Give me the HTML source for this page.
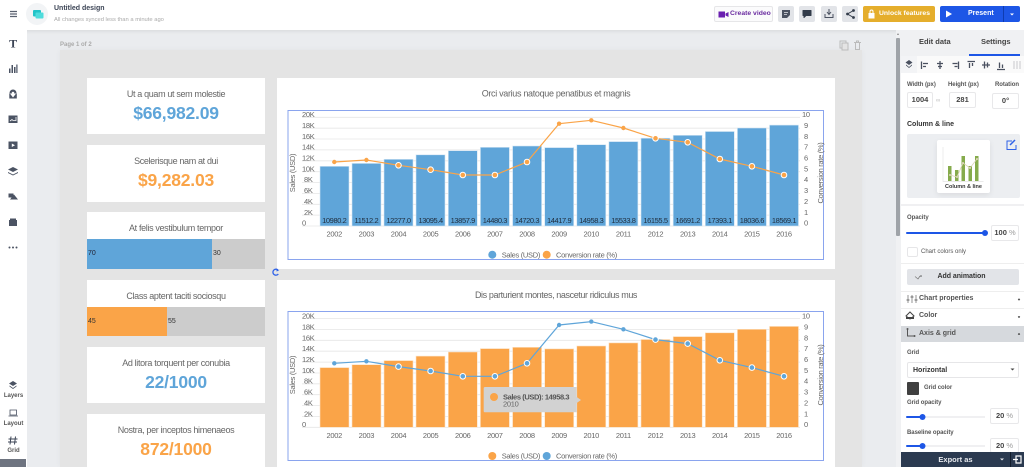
<!DOCTYPE html>
<html><head><meta charset="utf-8"><title>Untitled design</title>
<style>
html,body{margin:0;padding:0;width:1024px;height:467px;overflow:hidden;background:#eaecef;font-family:"Liberation Sans",sans-serif}
div{position:absolute;box-sizing:border-box}
.t{white-space:nowrap;line-height:10px}
.card{background:#fff;left:87px;width:178px}
.ct{left:0;width:178px;text-align:center;color:#666;font-size:9px;letter-spacing:-.35px;top:10px;line-height:12px;white-space:nowrap}
.cv{left:0;width:178px;text-align:center;font-size:17.5px;letter-spacing:-.2px;font-weight:bold;top:24px;line-height:22px}
.b{color:#5fa5d9}.o{color:#faa448}
.gb{top:6px;width:16px;height:16px;background:#e2e4e8;border-radius:2px}
.lab{font-size:6px;letter-spacing:-.05px;color:#555;font-weight:bold;white-space:nowrap;line-height:8px}
.pl{font-size:7px;color:#333;font-weight:bold;white-space:nowrap;line-height:10px}
.inp{background:#fff;border:1px solid #e8e8ea;border-radius:2px;font-size:7.5px;color:#444;text-align:center;font-weight:bold}
svg{position:absolute;left:0;top:0}
svg text{letter-spacing:-.3px}
.lb{left:0;width:27px;text-align:center;font-size:6px;font-weight:bold;color:#555;line-height:8px}
</style></head><body>

<!-- canvas background -->
<div style="left:27px;top:30px;width:869px;height:437px;background:#eaecef"></div>
<div style="left:60px;top:50px;width:802px;height:417px;background:#e4e4e4;box-shadow:0 0 6px rgba(0,0,0,.04)"></div>
<div class="t" style="left:60px;top:40px;font-size:6px;color:#aaa;font-weight:bold">Page 1 of 2</div>

<!-- KPI cards -->
<div class="card" style="top:78px;height:56px"><div class="ct">Ut a quam ut sem molestie</div><div class="cv b">$66,982.09</div></div>
<div class="card" style="top:145px;height:57px"><div class="ct">Scelerisque nam at dui</div><div class="cv o">$9,282.03</div></div>
<div class="card" style="top:212px;height:57px"><div class="ct">At felis vestibulum tempor</div>
 <div style="left:0;top:27px;width:125px;height:30px;background:#5fa5d9"><div class="t" style="left:1px;top:10px;font-size:7px;color:#223">70</div></div>
 <div style="left:125px;top:27px;width:53px;height:30px;background:#ccc"><div class="t" style="left:1px;top:10px;font-size:7px;color:#333">30</div></div></div>
<div class="card" style="top:280px;height:56px"><div class="ct">Class aptent taciti sociosqu</div>
 <div style="left:0;top:27px;width:80px;height:29px;background:#faa448"><div class="t" style="left:1px;top:10px;font-size:7px;color:#333">45</div></div>
 <div style="left:80px;top:27px;width:98px;height:29px;background:#ccc"><div class="t" style="left:1px;top:10px;font-size:7px;color:#333">55</div></div></div>
<div class="card" style="top:347px;height:56px"><div class="ct">Ad litora torquent per conubia</div><div class="cv b">22/1000</div></div>
<div class="card" style="top:414px;height:53px"><div class="ct">Nostra, per inceptos himenaeos</div><div class="cv o">872/1000</div></div>

<!-- chart cards -->
<div style="left:277px;top:78px;width:558px;height:191px;background:#fff"></div>
<div style="left:277px;top:280px;width:558px;height:187px;background:#fff"></div>

<svg width="1024" height="467" viewBox="0 0 1024 467" font-family="Liberation Sans, sans-serif">
<rect x="288" y="110.5" width="535.5" height="149" fill="none" stroke="#8aa4ee" stroke-width="1"/>
<rect x="288" y="311.5" width="535.5" height="149" fill="none" stroke="#8aa4ee" stroke-width="1"/>
<text x="556" y="96.5" font-size="9" fill="#666" text-anchor="middle" style="letter-spacing:-.32px">Orci varius natoque penatibus et magnis</text>
<text x="556" y="298" font-size="9" fill="#666" text-anchor="middle" style="letter-spacing:-.4px">Dis parturient montes, nascetur ridiculus mus</text>

<!-- chart grid -->
<g stroke="#e6e6e6" stroke-width="0.8">
<path d="M302 117.3H800M302 128.2H800M302 139H800M302 149.9H800M302 160.8H800M302 171.7H800M302 182.5H800M302 193.4H800M302 204.3H800M302 215.1H800M302 226H800"/>
<path d="M302 318.6H800M302 329.5H800M302 340.3H800M302 351.2H800M302 362.1H800M302 373H800M302 383.8H800M302 394.7H800M302 405.6H800M302 416.4H800M302 427.3H800"/>
</g>
<g fill="#666" font-size="7.5">
<text x="302" y="117">20K</text><text x="302" y="128">18K</text><text x="302" y="139">16K</text><text x="302" y="149.5">14K</text><text x="302" y="160.5">12K</text><text x="302" y="171.5">10K</text><text x="304" y="182">8K</text><text x="304" y="193">6K</text><text x="304" y="204">4K</text><text x="304" y="215">2K</text><text x="302" y="225.5">0</text>
<text x="802" y="117">10</text><text x="804" y="128">9</text><text x="804" y="139">8</text><text x="804" y="149.5">7</text><text x="804" y="160.5">6</text><text x="804" y="171.5">5</text><text x="804" y="182">4</text><text x="804" y="193">3</text><text x="804" y="204">2</text><text x="804" y="215">1</text><text x="804" y="225.5">0</text>
<text x="302" y="318.5">20K</text><text x="302" y="329.5">18K</text><text x="302" y="340.5">16K</text><text x="302" y="351">14K</text><text x="302" y="362">12K</text><text x="302" y="373">10K</text><text x="304" y="383.5">8K</text><text x="304" y="394.5">6K</text><text x="304" y="405.5">4K</text><text x="304" y="416.5">2K</text><text x="302" y="427">0</text>
<text x="802" y="318.5">10</text><text x="804" y="329.5">9</text><text x="804" y="340.5">8</text><text x="804" y="351">7</text><text x="804" y="362">6</text><text x="804" y="373">5</text><text x="804" y="383.5">4</text><text x="804" y="394.5">3</text><text x="804" y="405.5">2</text><text x="804" y="416.5">1</text><text x="804" y="427">0</text>
<text transform="translate(295,173) rotate(-90)" text-anchor="middle">Sales (USD)</text>
<text transform="translate(823,173) rotate(-90)" text-anchor="middle">Conversion rate (%)</text>
<text transform="translate(295,375) rotate(-90)" text-anchor="middle">Sales (USD)</text>
<text transform="translate(823,375) rotate(-90)" text-anchor="middle">Conversion rate (%)</text>
</g>

<!-- bars chart 1 -->
<g fill="#5fa5d9" stroke="#d4e6f4" stroke-width="0.6">
<rect x="320" y="166.3" width="29" height="59.7"/><rect x="352" y="163.4" width="29" height="62.6"/><rect x="384" y="159.3" width="29" height="66.7"/><rect x="416" y="154.8" width="29" height="71.2"/><rect x="448.3" y="150.7" width="29" height="75.3"/><rect x="480.4" y="147.3" width="29" height="78.7"/><rect x="512.6" y="146" width="29" height="80"/><rect x="544.7" y="147.6" width="29" height="78.4"/><rect x="576.8" y="144.7" width="29" height="81.3"/><rect x="608.9" y="141.6" width="29" height="84.4"/><rect x="641" y="138.2" width="29" height="87.8"/><rect x="673.2" y="135.3" width="29" height="90.7"/><rect x="705.3" y="131.5" width="29" height="94.5"/><rect x="737.4" y="128" width="29" height="98"/><rect x="769.5" y="125.1" width="29" height="100.9"/>
</g>
<g fill="#1f2d3d" font-size="7.5" text-anchor="middle" style="letter-spacing:-.4px">
<text x="334.3" y="223" style="letter-spacing:-.4px">10980.2</text><text x="366.4" y="223" style="letter-spacing:-.4px">11512.2</text><text x="398.5" y="223" style="letter-spacing:-.4px">12277.0</text><text x="430.6" y="223" style="letter-spacing:-.4px">13095.4</text><text x="462.8" y="223" style="letter-spacing:-.4px">13857.9</text><text x="494.9" y="223" style="letter-spacing:-.4px">14480.3</text><text x="527" y="223" style="letter-spacing:-.4px">14720.3</text><text x="559.1" y="223" style="letter-spacing:-.4px">14417.9</text><text x="591.3" y="223" style="letter-spacing:-.4px">14958.3</text><text x="623.4" y="223" style="letter-spacing:-.4px">15533.8</text><text x="655.5" y="223" style="letter-spacing:-.4px">16155.5</text><text x="687.7" y="223" style="letter-spacing:-.4px">16691.2</text><text x="719.8" y="223" style="letter-spacing:-.4px">17393.1</text><text x="751.9" y="223" style="letter-spacing:-.4px">18036.6</text><text x="784" y="223" style="letter-spacing:-.4px">18569.1</text>
</g>
<g fill="#666" font-size="7.5" text-anchor="middle">
<text x="334.3" y="236.5">2002</text><text x="366.4" y="236.5">2003</text><text x="398.5" y="236.5">2004</text><text x="430.6" y="236.5">2005</text><text x="462.8" y="236.5">2006</text><text x="494.9" y="236.5">2007</text><text x="527" y="236.5">2008</text><text x="559.1" y="236.5">2009</text><text x="591.3" y="236.5">2010</text><text x="623.4" y="236.5">2011</text><text x="655.5" y="236.5">2012</text><text x="687.7" y="236.5">2013</text><text x="719.8" y="236.5">2014</text><text x="751.9" y="236.5">2015</text><text x="784" y="236.5">2016</text>
</g>
<polyline fill="none" stroke="#faa448" stroke-width="1.2" points="334.3,162 366.4,160 398.5,165.3 430.6,169.7 462.8,175 494.9,175 527,162 559.1,123.7 591.3,120.3 623.4,128 655.5,138.3 687.7,142.3 719.8,159 751.9,166.3 784,175"/>
<g fill="#faa448">
<circle cx="334.3" cy="162" r="2.2"/><circle cx="366.4" cy="160" r="2.2"/><circle cx="559.1" cy="123.7" r="2.2"/><circle cx="591.3" cy="120.3" r="2.2"/><circle cx="623.4" cy="128" r="2.2"/>
<g stroke="#fff" stroke-width="1"><circle cx="398.5" cy="165.3" r="2.8"/><circle cx="430.6" cy="169.7" r="2.8"/><circle cx="462.8" cy="175" r="2.8"/><circle cx="494.9" cy="175" r="2.8"/><circle cx="527" cy="162" r="2.8"/><circle cx="655.5" cy="138.3" r="2.8"/><circle cx="687.7" cy="142.3" r="2.8"/><circle cx="719.8" cy="159" r="2.8"/><circle cx="751.9" cy="166.3" r="2.8"/><circle cx="784" cy="175" r="2.8"/></g>
</g>
<circle cx="492.3" cy="254.7" r="4" fill="#5fa5d9"/><circle cx="546.7" cy="254.7" r="4" fill="#faa448"/>
<g fill="#666" font-size="7.5"><text x="501.7" y="257.3">Sales (USD)</text><text x="556" y="257.3">Conversion rate (%)</text></g>

<!-- bars chart 2 -->
<g fill="#faa448" stroke="#fde3c5" stroke-width="0.6">
<rect x="320" y="367.6" width="29" height="59.7"/><rect x="352" y="364.7" width="29" height="62.6"/><rect x="384" y="360.6" width="29" height="66.7"/><rect x="416" y="356.1" width="29" height="71.2"/><rect x="448.3" y="352" width="29" height="75.3"/><rect x="480.4" y="348.6" width="29" height="78.7"/><rect x="512.6" y="347.3" width="29" height="80"/><rect x="544.7" y="348.9" width="29" height="78.4"/><rect x="576.8" y="346" width="29" height="81.3"/><rect x="608.9" y="342.9" width="29" height="84.4"/><rect x="641" y="339.5" width="29" height="87.8"/><rect x="673.2" y="336.6" width="29" height="90.7"/><rect x="705.3" y="332.8" width="29" height="94.5"/><rect x="737.4" y="329.3" width="29" height="98"/><rect x="769.5" y="326.4" width="29" height="100.9"/>
</g>
<g fill="#666" font-size="7.5" text-anchor="middle">
<text x="334.3" y="437.8">2002</text><text x="366.4" y="437.8">2003</text><text x="398.5" y="437.8">2004</text><text x="430.6" y="437.8">2005</text><text x="462.8" y="437.8">2006</text><text x="494.9" y="437.8">2007</text><text x="527" y="437.8">2008</text><text x="559.1" y="437.8">2009</text><text x="591.3" y="437.8">2010</text><text x="623.4" y="437.8">2011</text><text x="655.5" y="437.8">2012</text><text x="687.7" y="437.8">2013</text><text x="719.8" y="437.8">2014</text><text x="751.9" y="437.8">2015</text><text x="784" y="437.8">2016</text>
</g>
<polyline fill="none" stroke="#5fa5d9" stroke-width="1.2" points="334.3,363.3 366.4,361.3 398.5,366.6 430.6,371 462.8,376.3 494.9,376.3 527,363.3 559.1,325 591.3,321.6 623.4,329.3 655.5,339.6 687.7,343.6 719.8,360.3 751.9,367.6 784,376.3"/>
<g fill="#5fa5d9">
<circle cx="334.3" cy="363.3" r="2.2"/><circle cx="366.4" cy="361.3" r="2.2"/><circle cx="559.1" cy="325" r="2.2"/><circle cx="591.3" cy="321.6" r="2.2"/><circle cx="623.4" cy="329.3" r="2.2"/>
<g stroke="#fff" stroke-width="1"><circle cx="398.5" cy="366.6" r="2.8"/><circle cx="430.6" cy="371" r="2.8"/><circle cx="462.8" cy="376.3" r="2.8"/><circle cx="494.9" cy="376.3" r="2.8"/><circle cx="527" cy="363.3" r="2.8"/><circle cx="655.5" cy="339.6" r="2.8"/><circle cx="687.7" cy="343.6" r="2.8"/><circle cx="719.8" cy="360.3" r="2.8"/><circle cx="751.9" cy="367.6" r="2.8"/><circle cx="784" cy="376.3" r="2.8"/></g>
</g>
<circle cx="492.3" cy="456" r="4" fill="#faa448"/><circle cx="546.7" cy="456" r="4" fill="#5fa5d9"/>
<g fill="#666" font-size="7.5"><text x="501.7" y="458.6">Sales (USD)</text><text x="556" y="458.6">Conversion rate (%)</text></g>

<!-- tooltip -->
<path d="M485 387H576.7V397L581 400L576.7 403V412.3H485Q483.7 412.3 483.7 411V388.3Q483.7 387 485 387Z" fill="#d2d2d2"/>
<circle cx="494" cy="397" r="4" fill="#faa448"/>
<text x="503" y="399.6" font-size="7.5" font-weight="bold" fill="#555" style="letter-spacing:-.4px">Sales (USD): 14958.3</text>
<text x="503" y="406.5" font-size="7.5" fill="#666">2010</text>

<!-- rotate handle -->
<path d="M278 270A3 3 0 1 0 278.3 274" fill="none" stroke="#2f62e8" stroke-width="1.3"/>
<path d="M276.5 268.5L279 270.5L276.5 271.5Z" fill="#2f62e8"/>
<!-- page icons -->
<g fill="none" stroke="#bbb" stroke-width="1"><rect x="840" y="41" width="6" height="7"/><rect x="842" y="43" width="6" height="7" fill="#e4e4e4"/><path d="M854 42.5H861M855.5 42.5V49.5H859.5V42.5M856.5 42.5V41H858.5V42.5"/></g>
</svg>

<!-- Top bar -->
<div style="left:0;top:0;width:1024px;height:30px;background:#fff;box-shadow:0 1px 4px rgba(0,0,0,.09)"></div>
<!-- Left bar -->
<div style="left:0;top:30px;width:27px;height:437px;background:#fff"></div>
<div style="left:0;top:459px;width:26px;height:8px;background:#6e7480"></div>
<div class="t" style="left:54px;top:4px;font-size:7px;font-weight:bold;color:#3c4556">Untitled design</div>
<div class="t" style="left:54px;top:14.5px;font-size:5.8px;color:#aaa">All changes synced less than a minute ago</div>
<div class="lb" style="top:392px">Layers</div>
<div class="lb" style="top:420px">Layout</div>
<div class="lb" style="top:447px">Grid</div>

<!-- top right buttons -->
<div style="left:714px;top:6px;width:59px;height:16px;background:#fbfbfc;border:1px solid #e6e6e8;border-radius:2px"></div>
<div class="t" style="left:730px;top:9px;font-size:6.8px;font-weight:bold;color:#6a2ca0">Create video</div>
<div class="gb" style="left:778px"></div><div class="gb" style="left:799px"></div><div class="gb" style="left:821px"></div><div class="gb" style="left:842px"></div>
<div style="left:863px;top:6px;width:72px;height:16px;background:#e5ae2c;border-radius:2px"></div>
<div class="t" style="left:879px;top:9px;font-size:6.8px;font-weight:bold;color:#fff">Unlock features</div>
<div style="left:940px;top:6px;width:80px;height:16px;background:#1d56e6;border-radius:2px"></div>
<div style="left:1003px;top:6px;width:1px;height:16px;background:#0f3cb0"></div>
<div class="t" style="left:968px;top:9px;font-size:7px;font-weight:bold;color:#fff">Present</div>

<!-- right panel -->
<div style="left:896px;top:30px;width:5px;height:437px;background:#f0f1f3"></div>
<div style="left:896px;top:38px;width:4px;height:198px;background:#9fa3a8;border-radius:1px"></div>
<div style="left:901px;top:30px;width:123px;height:437px;background:#fff"></div>
<div style="left:901px;top:30px;width:123px;height:26px;background:#f0f1f3"></div>
<div class="t" style="left:919px;top:37px;font-size:7.5px;font-weight:bold;color:#444">Edit data</div>
<div class="t" style="left:981px;top:37px;font-size:7.5px;font-weight:bold;color:#444">Settings</div>
<div style="left:969px;top:54px;width:51px;height:2px;background:#1d56e6"></div>
<div style="left:901px;top:56px;width:123px;height:17px;background:#f3f4f6"></div>
<div style="left:917px;top:56px;width:107px;height:17px;background:#fafafa"></div>
<div class="lab" style="left:907px;top:81px">Width (px)</div>
<div class="lab" style="left:948px;top:81px">Height (px)</div>
<div class="lab" style="left:995px;top:81px">Rotation</div>
<div class="inp" style="left:907px;top:92px;width:26px;height:16px;line-height:14px">1004</div>
<div class="t" style="left:936px;top:96px;font-size:6px;color:#bbb">&#8734;</div>
<div class="inp" style="left:949px;top:92px;width:27px;height:16px;line-height:14px">281</div>
<div class="inp" style="left:992px;top:93px;width:27px;height:16px;line-height:14px">0&#176;</div>
<div class="pl" style="left:907px;top:120px">Column &amp; line</div>
<div style="left:907px;top:134px;width:113px;height:64px;background:#eceef1;border-radius:2px"></div>
<div style="left:937px;top:140px;width:53px;height:53px;background:#fff;border-radius:2px;box-shadow:0 2px 6px rgba(0,0,0,.08)"></div>
<div class="t" style="left:937px;top:182px;width:53px;text-align:center;font-size:5.5px;font-weight:bold;color:#333">Column &amp; line</div>
<div style="left:901px;top:204px;width:123px;height:2px;background:#f0f0f2"></div>
<div class="lab" style="left:907px;top:214px">Opacity</div>
<div class="inp" style="left:991px;top:225px;width:28px;height:16px;line-height:14px">100<span style="color:#999;font-weight:normal"> %</span></div>
<div style="left:907px;top:247px;width:11px;height:10px;background:#fff;border:1px solid #e6e6e8;border-radius:2px"></div>
<div class="t" style="left:921px;top:247px;font-size:6px;color:#555">Chart colors only</div>
<div style="left:901px;top:263px;width:123px;height:1px;background:#eee"></div>
<div style="left:907px;top:269px;width:112px;height:16px;background:#e2e4e8;border-radius:2px"></div>
<div class="pl" style="left:937.5px;top:272px;letter-spacing:-.05px">Add animation</div>
<div style="left:901px;top:291px;width:123px;height:1px;background:#eee"></div>
<div class="pl" style="left:919px;top:294px;color:#555">Chart properties</div>
<div style="left:901px;top:308px;width:123px;height:1px;background:#eee"></div>
<div class="pl" style="left:919px;top:311px;color:#555">Color</div>
<div style="left:901px;top:326px;width:123px;height:16px;background:#d6d9dd"></div>
<div class="pl" style="left:919px;top:328.5px;color:#555">Axis &amp; grid</div>
<div class="lab" style="left:907px;top:349px">Grid</div>
<div class="pl" style="left:907px;top:362px;width:112px;height:16px;background:#fff;border:1px solid #e6e6e8;border-radius:2px;padding:3px 5px">Horizontal</div>
<div style="left:907px;top:382px;width:12px;height:13px;background:#404040;border-radius:1px"></div>
<div class="lab" style="left:924px;top:384px">Grid color</div>
<div class="lab" style="left:907px;top:399px">Grid opacity</div>
<div class="inp" style="left:990px;top:408px;width:29px;height:16px;line-height:14px">20 <span style="color:#999;font-weight:normal">%</span></div>
<div class="lab" style="left:907px;top:429px">Baseline opacity</div>
<div class="inp" style="left:990px;top:438px;width:29px;height:15px;line-height:14px">20 <span style="color:#999;font-weight:normal">%</span></div>
<div style="left:901px;top:452px;width:123px;height:15px;background:#2b3a50"></div>
<div style="left:1010px;top:452px;width:1px;height:15px;background:#111c2c"></div>
<div class="t" style="left:901px;top:455px;width:109px;text-align:center;font-size:7.5px;font-weight:bold;color:#e8eaee">Export as</div>

<!-- icon overlay -->
<svg width="1024" height="467" viewBox="0 0 1024 467" font-family="Liberation Sans, sans-serif">
<path d="M10 11.5H17M10 14H17M10 16.5H17" stroke="#5a6270" stroke-width="1.2"/>
<circle cx="37" cy="14" r="11" fill="#f2f4f6"/>
<rect x="33" y="10" width="8" height="6.5" fill="#22c4c8" rx="1"/><rect x="35.5" y="12.5" width="8" height="6" fill="#4fdcdc" rx="1"/>
<text x="13" y="47.5" font-family="Liberation Serif, serif" font-size="12" font-weight="bold" text-anchor="middle" fill="#3c4556">T</text>
<path d="M9 73V68.5H10.5V73ZM11.5 73V65H13V73ZM14 73V67H15.5V73ZM16.3 73V64.5H17.5V73Z" fill="#4b5363"/>
<path d="M13 89.5A3.5 3.5 0 0 1 16.5 93L13 97.5L9.5 93A3.5 3.5 0 0 1 13 89.5ZM9.3 93.5V98.5H16.8V93.5" fill="#4b5363"/><circle cx="13" cy="93" r="1.3" fill="#fff"/>
<path d="M8.5 115.5H17.5V123H8.5Z" fill="#4b5363"/><path d="M10 121L12 119.5L13 120.5H16V117" fill="none" stroke="#fff" stroke-width=".8"/>
<path d="M8.5 141.5H17.5V149H8.5Z" fill="#4b5363"/><path d="M11.8 143.5L15 145.3L11.8 147Z" fill="#fff"/>
<path d="M13 167L18 169.5L13 172L8 169.5ZM8 172L13 174.5L18 172V173L13 175.5L8 173Z" fill="#4b5363"/>
<path d="M8.5 193.5H13.5V197.5H8.5Z" fill="#4b5363"/><path d="M14 194.5L18 199.5H10Z" fill="#4b5363"/>
<path d="M10 218.5H16V220H17V226H9V220H10Z" fill="#4b5363"/>
<circle cx="9.5" cy="247.5" r="1" fill="#4b5363"/><circle cx="13" cy="247.5" r="1" fill="#4b5363"/><circle cx="16.5" cy="247.5" r="1" fill="#4b5363"/>
<path d="M13 381L17 383.5L13 386L9 383.5ZM9.5 385.5L13 388L16.5 385.5V386.5L13 389L9.5 386.5Z" fill="#4b5363"/>
<path d="M10 410H16.5V415H10ZM8.5 416H18" fill="none" stroke="#4b5363" stroke-width=".8"/>
<path d="M11 436.5L10 444.5M15.5 436.5L14.5 444.5M8.5 439H17.5M8 442H17" stroke="#3c4556" stroke-width="1" fill="none"/>
<path d="M718.5 11.5H725V17.5H718.5ZM725.5 13.5L728.5 12V17L725.5 15.5Z" fill="#6a1fb0"/>
<path d="M782 10H790V15L787 18H782Z" fill="#4a5160"/><path d="M784 12.5H788M784 14.5H787" stroke="#e2e4e8" stroke-width=".8"/>
<path d="M803 10.5H811V15.5H806L804 17.5V15.5H803Z" fill="#333c4a" stroke="#333c4a" stroke-linejoin="round"/>
<path d="M829 9V14M827 12L829 14.5L831 12M825 14V17.5H833V14" fill="none" stroke="#4a5160" stroke-width="1"/>
<path d="M853.5 10.5L847.5 14L853.5 17.5" fill="none" stroke="#333c4a" stroke-width="1"/><circle cx="853.5" cy="10.5" r="1.4" fill="#333c4a"/><circle cx="847.5" cy="14" r="1.4" fill="#333c4a"/><circle cx="853.5" cy="17.5" r="1.4" fill="#333c4a"/>
<path d="M868.5 13H874.5V18.5H868.5Z" fill="#fff"/><path d="M870 13V11.5A1.5 1.5 0 0 1 873 11.5V13" fill="none" stroke="#fff"/>
<path d="M946 10.5L952 14L946 17.5Z" fill="#fff"/>
<path d="M1010 13.5H1014L1012 15.5Z" fill="#fff"/>
<path d="M897 35L898 33L899 35Z" fill="#888"/>
<!-- alignment row -->
<g stroke="#4a5160" fill="none" stroke-width="1.3">
<path d="M921.5 61.5V69M923 63.5H928M923 66.5H926"/>
<path d="M940 61V69M937 63.5H943M938 66.5H942"/>
<path d="M958.5 61.5V69M952.5 63.5H957.5M954.5 66.5H957.5"/>
<path d="M967.5 61.5H975M969.5 63V68M972.5 63V66"/>
<path d="M982 65H990M984.5 61.5V68.5M987.5 62.5V67.5"/>
<path d="M997 69.5H1005M999.5 62.5V68M1002.5 64.5V68"/>
</g>
<path d="M1014 61V69M1017 61V69M1020 61V69" stroke="#c8c8cc" fill="none"/>
<path d="M909 60L912.5 62.5L909 65L905.5 62.5ZM906 64.5L909 67L912 64.5V65.5L909 68L906 65.5Z" fill="#4a5160"/>
<!-- thumb chart -->
<path d="M943 147V181.5H983.5" stroke="#e4e4e4" fill="none" stroke-width=".7"/>
<g fill="#86ab4c"><rect x="948" y="166" width="3.5" height="15"/><rect x="955" y="170" width="3.5" height="11"/><rect x="961.5" y="156" width="3.5" height="25"/><rect x="968.5" y="166" width="3.5" height="15"/><rect x="975" y="156" width="3.5" height="25"/></g>
<polyline points="950,175 957,177 963,163 970,168 977,159" fill="none" stroke="#dcd5b8" stroke-width=".8"/>
<g fill="#e0d5bd"><circle cx="950" cy="175" r="1"/><circle cx="957" cy="177" r="1"/><circle cx="963" cy="163" r="1"/><circle cx="970" cy="168" r="1"/><circle cx="977" cy="159" r="1"/></g>
<path d="M1006.5 141H1012M1016 145V149.5H1007V140.5" fill="none" stroke="#2f62e8" stroke-width="1"/><path d="M1010 145L1015 140" stroke="#2f62e8" stroke-width="1.5"/>
<!-- sliders -->
<path d="M907 233H985" stroke="#1d56e6" stroke-width="2" stroke-linecap="round"/><circle cx="985" cy="233" r="3" fill="#1d56e6"/>
<path d="M907 417H985" stroke="#f0f0f2" stroke-width="2"/><path d="M907 417H922" stroke="#1d56e6" stroke-width="2" stroke-linecap="round"/><circle cx="922.5" cy="417" r="3" fill="#1d56e6"/>
<path d="M907 446H985" stroke="#f0f0f2" stroke-width="2"/><path d="M907 446H922" stroke="#1d56e6" stroke-width="2" stroke-linecap="round"/><circle cx="922.5" cy="446" r="3" fill="#1d56e6"/>
<!-- accordions -->
<path d="M915 276.5L918 279L920 276" fill="none" stroke="#777" stroke-width=".7"/><circle cx="921" cy="276" r=".8" fill="#555"/>
<path d="M908 295V303M912 295V303M916 295V303" stroke="#666" stroke-width=".7"/><path d="M906.5 300H909.5M910.5 297H913.5M914.5 300H917.5" stroke="#666" stroke-width="1"/>
<path d="M910 312L914 316L910 319L906 316Z" fill="none" stroke="#444" stroke-width="1"/><path d="M906 317H914V319H906Z" fill="#444"/>
<path d="M907.5 329V336H914" fill="none" stroke="#555" stroke-width="1"/><circle cx="907.5" cy="329" r="1" fill="#555"/><circle cx="914.5" cy="336" r="1" fill="#555"/>
<path d="M1018 299L1020 299L1019 300.5ZM1018 316.5L1020 316.5L1019 318ZM1018 334.5L1020 334.5L1019 333Z" fill="#444" stroke="#444" stroke-width=".5"/>
<path d="M1010.5 368.5H1014.5L1012.5 370.5Z" fill="#444"/>
<path d="M1000 458.5H1004L1002 460.5Z" fill="#e8eaee"/>
<path d="M1016 456H1021V463H1016ZM1013 459.5H1018" fill="none" stroke="#fff" stroke-width="1.2"/>
</svg>
</body></html>
